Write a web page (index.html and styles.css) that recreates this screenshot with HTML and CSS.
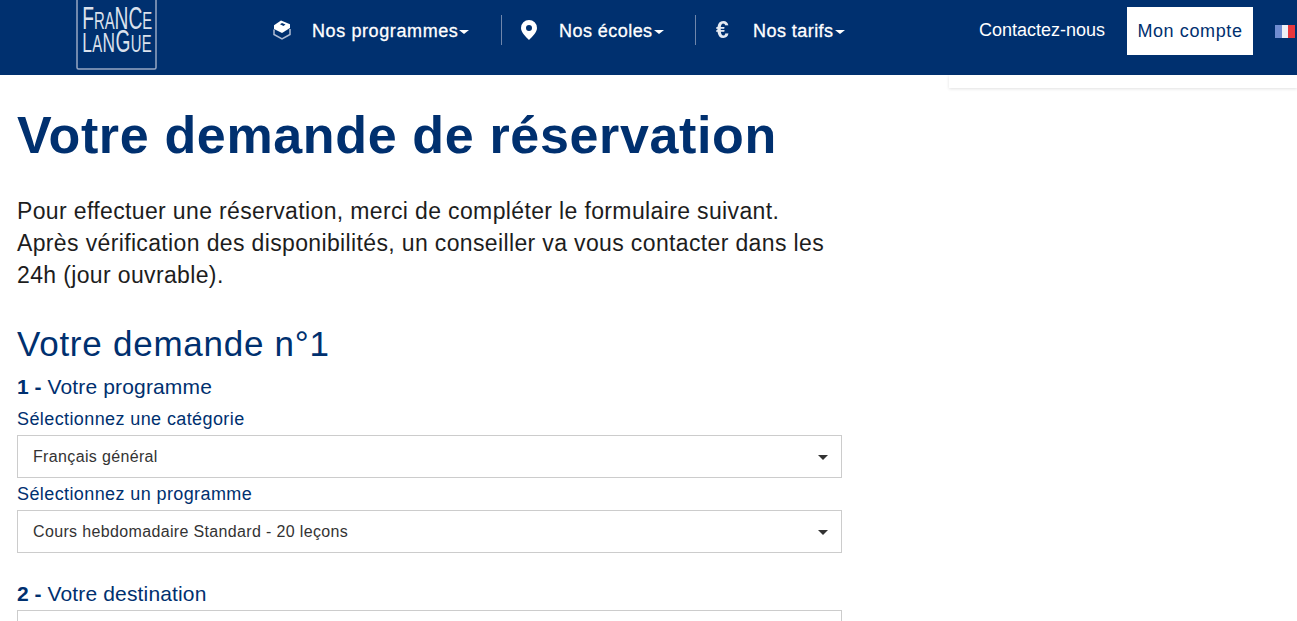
FILE: index.html
```html
<!DOCTYPE html>
<html lang="fr">
<head>
<meta charset="utf-8">
<title>Votre demande de réservation</title>
<link rel="stylesheet" href="styles.css">
</head>
<body>
<header class="topbar">
  <a class="logo">
    <svg viewBox="0 0 81 81" width="81" height="81">
      <rect x="1" y="1" width="79" height="79" rx="1.500" fill="none" stroke="#97a7c4" stroke-width="1.500"/>
      <g transform="scale(.62 1)">
        <text x="10" y="40" class="logo-text"><tspan class="lg">F</tspan>RA<tspan class="lg">NC</tspan>E</text>
        <text x="10" y="63" class="logo-text logo-second"><tspan class="lg2">L</tspan>A<tspan class="lg2">N</tspan><tspan class="lg">G</tspan>UE</text>
      </g>
    </svg>
  </a>
  <nav class="mainnav">
    <a class="navitem nav-programmes">
      <svg class="navicon" viewBox="0 0 18 20" width="18" height="20"><path d="M8 .5l9 3.800v3.700L9 13 1 9V5.300z" fill="#fff"/><path d="M1 9.500v5L9 19l8-4.500V9" fill="none" stroke="#aebcd4" stroke-width="1.500"/><path d="M9 3l3.500 1.600-2 1.400L7 4.300z" fill="#00306f"/></svg>
      <span class="navlabel">Nos programmes</span><i class="caret"></i>
    </a>
    <a class="navitem nav-ecoles">
      <svg class="navicon" viewBox="0 0 16 20" width="16" height="20"><path fill-rule="evenodd" d="M8 0a8 8 0 0 1 8 8c0 4.500-5 9-8 12-3-3-8-7.500-8-12a8 8 0 0 1 8-8zm0 5a3 3 0 1 0 0 6 3 3 0 0 0 0-6z" fill="#fff"/></svg>
      <span class="navlabel">Nos écoles</span><i class="caret"></i>
    </a>
    <a class="navitem nav-tarifs">
      <span class="euro">€</span>
      <span class="navlabel">Nos tarifs</span><i class="caret"></i>
    </a>
  </nav>
  <div class="rightnav">
    <a class="contact">Contactez-nous</a>
    <a class="account">Mon compte</a>
    <span class="flag"><i class="blue"></i><i class="white"></i><i class="red"></i></span>
  </div>
</header>
<div class="subpanel-row"><div class="subpanel"></div></div>
<main class="content">
  <h1>Votre demande de réservation</h1>
  <p class="intro">Pour effectuer une réservation, merci de compléter le formulaire suivant.<br>Après vérification des disponibilités, un conseiller va vous contacter dans les<br>24h (jour ouvrable).</p>
  <h2>Votre demande n°1</h2>
  <h3><b>1 -</b> Votre programme</h3>
  <label class="fieldlabel">Sélectionnez une catégorie</label>
  <div class="select"><span>Français général</span><i class="select-caret"></i></div>
  <label class="fieldlabel">Sélectionnez un programme</label>
  <div class="select"><span>Cours hebdomadaire Standard - 20 leçons</span><i class="select-caret"></i></div>
  <h3 class="second"><b>2 -</b> Votre destination</h3>
  <div class="select"></div>
</main>
</body>
</html>
```
FILE: styles.css
```css
* { box-sizing: border-box; }
html, body { margin: 0; height: 621px; overflow: hidden; background: #fff; }
body { font-family: "Liberation Sans", sans-serif; color: #00306f; }

.topbar { height: 75px; background: #00306f; display: flex; align-items: flex-start; color: #fff; }
.logo { display: block; width: 81px; height: 81px; margin: -11px 0 0 76px; flex: none; }
.logo-text { font-family: "Liberation Sans", sans-serif; font-size: 24px; fill: #dbe1ec; }
.logo-second { letter-spacing: .6px; }
.lg { font-size: 31px; }
.lg2 { font-size: 28px; }

.mainnav { display: flex; margin-left: 116px; flex: none; }
.navitem { display: flex; align-items: center; height: 30px; margin-top: 15px; font-size: 18px; letter-spacing: .45px; white-space: nowrap; }
.navlabel { position: relative; top: 1px; -webkit-text-stroke: .3px #fff; }
.navicon { flex: none; }
.nav-programmes { width: 228px; letter-spacing: .6px; }
.nav-programmes .navicon { margin-right: 21px; }
.nav-ecoles { width: 194px; border-left: 1px solid #6f86ab; padding-left: 19px; }
.nav-ecoles .navicon { margin-right: 22px; }
.nav-tarifs { border-left: 1px solid #6f86ab; padding-left: 20px; }
.euro { width: 37px; font-size: 23px; font-weight: 700; color: #e5eaf2; filter: blur(.4px); }
.caret { margin-left: 1px; margin-top: 3px; border-left: 5px solid transparent; border-right: 5px solid transparent; border-top: 4px solid #fff; }

.rightnav { display: flex; align-items: flex-start; margin-left: auto; flex: none; }
.contact { margin-top: 20px; font-size: 18px; margin-right: 22px; white-space: nowrap; }
.account { width: 126px; height: 48px; margin-top: 7px; background: #fff; color: #00306f; font-size: 18px; letter-spacing: .62px; display: flex; align-items: center; justify-content: center; }
.flag { display: flex; width: 20px; height: 13px; margin: 25px 2px 0 22px; filter: blur(.6px); }
.flag i { flex: 1; }
.blue { background: #6f8cd0; } .white { background: #eef0f6; } .red { background: #e8383c; }

.subpanel-row { display: flex; justify-content: flex-end; height: 13px; }
.subpanel { width: 348px; height: 13px; background: #fff; box-shadow: 0 1px 3px rgba(0,0,0,.12); }

.content { width: 859px; padding: 0 17px; }
h1 { margin: 12px 0 0; font-size: 52px; line-height: 70px; font-weight: 700; letter-spacing: .65px; white-space: nowrap; }
.intro { margin: 25px 0 0; font-size: 23px; line-height: 32px; letter-spacing: .36px; color: #1d1d1d; white-space: nowrap; }
h2 { margin: 28px 0 0; font-size: 35px; line-height: 50px; font-weight: 400; letter-spacing: .75px; }
h3 { margin: 5px 0 0; font-size: 21px; line-height: 26px; font-weight: 400; letter-spacing: .15px; }
h3 b { letter-spacing: 0; }
h3.second { margin-top: 28px; }
.fieldlabel { display: block; font-size: 18px; line-height: 24px; letter-spacing: .4px; margin-top: 7px; margin-bottom: 4px; }
.select + .fieldlabel { margin-top: 4px; margin-bottom: 4px; }
.select { position: relative; height: 43px; border: 1px solid #ccc; padding: 0 15px; display: flex; align-items: center; font-size: 16px; letter-spacing: .35px; color: #333; }
h3.second + .select { margin-top: 3px; }
.select-caret { position: absolute; right: 13px; top: 19px; border-left: 5px solid transparent; border-right: 5px solid transparent; border-top: 5px solid #333; }
```
